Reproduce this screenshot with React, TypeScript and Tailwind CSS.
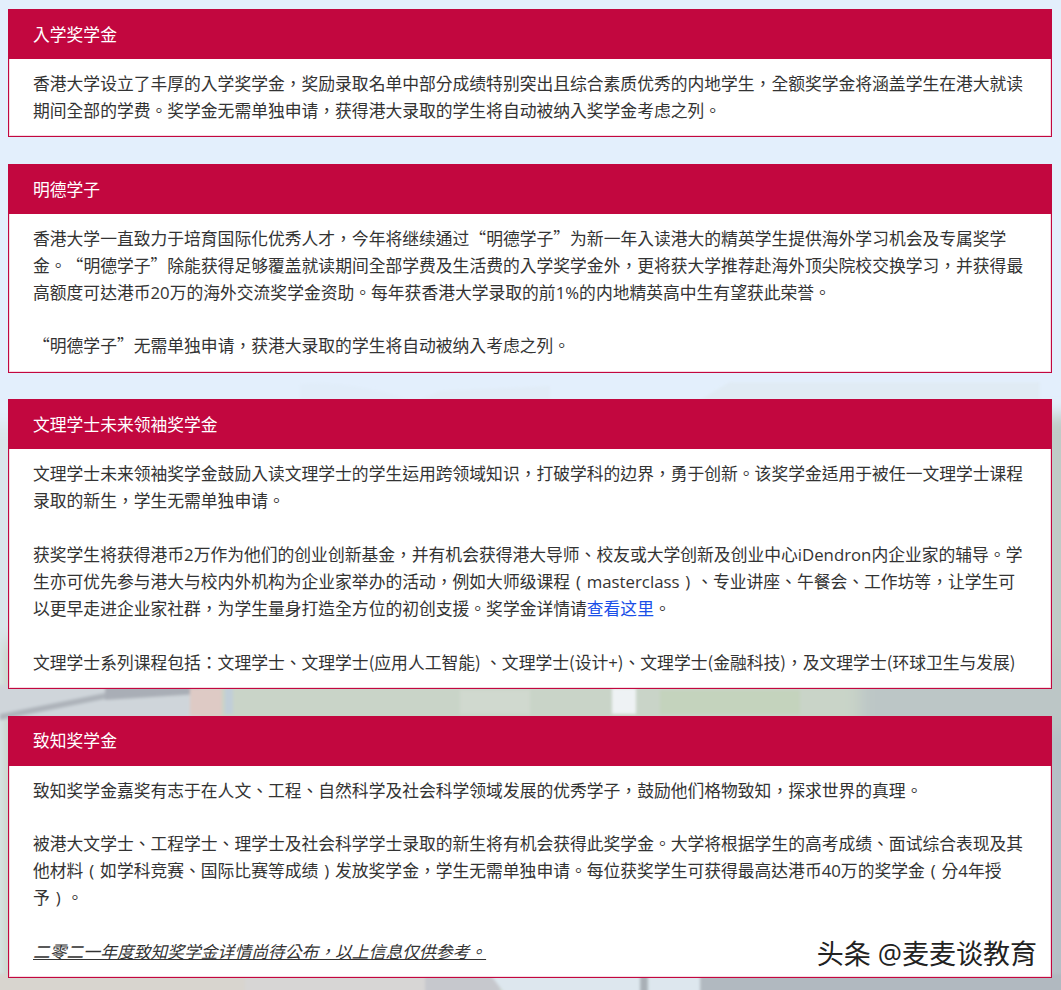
const bodyFont = "font-['Open_Sans','Noto_Sans_CJK_TC','Noto_Sans_CJK_SC',sans-serif]";

// quotes and brackets come from the CJK face, the Latin one makes them too narrow
function Cjk({ children }: { children: React.ReactNode }) {
  return <span className="font-['Noto_Sans_CJK_TC',sans-serif] leading-none">{children}</span>;
}

function Backdrop() {
  return (
    <svg
      aria-hidden="true"
      className="absolute inset-0 h-full w-full"
      viewBox="0 0 1061 990"
      preserveAspectRatio="none"
    >
      <defs>
        <filter id="soft">
          <feGaussianBlur stdDeviation="1.5" />
        </filter>
        <filter id="softer">
          <feGaussianBlur stdDeviation="8" />
        </filter>
      </defs>
      <rect width="1061" height="990" fill="#e3effc" />
      <g filter="url(#softer)">
        <rect x="0" y="640" width="1061" height="360" fill="#c9d4c8" />
        <rect x="-20" y="425" width="50" height="215" fill="#dae5ea" />
        <rect x="1040" y="415" width="50" height="290" fill="#bfcbc6" />
        <rect x="1040" y="700" width="50" height="320" fill="#b5bfc6" />
        <rect x="860" y="660" width="220" height="70" fill="#bcc6c6" />
      </g>
      <g filter="url(#soft)">
        <rect x="-5" y="685" width="205" height="35" fill="#cfd5da" />
        <path d="M0 714 L110 692 L110 698 L0 720 Z" fill="#adb3ba" />
        <path d="M105 686 L200 686 L200 694 L105 700 Z" fill="#a9aeb6" />
        <rect x="190" y="688" width="32" height="28" fill="#decac5" />
        <rect x="225" y="686" width="8" height="28" fill="#c1ced8" />
        <rect x="460" y="690" width="70" height="24" fill="#d0d9cf" />
        <rect x="612" y="688" width="24" height="26" fill="#eef2f4" />
        <rect x="660" y="690" width="140" height="24" fill="#c4d3bd" />
        <rect x="-5" y="974" width="250" height="20" fill="#d8d5cf" />
        <rect x="245" y="974" width="180" height="20" fill="#d7d6d5" />
        <rect x="425" y="974" width="75" height="20" fill="#c6c8cd" />
        <path d="M490 974 L720 974 L720 994 L505 994 Z" fill="#dde7ee" />
        <rect x="640" y="974" width="8" height="20" fill="#a9b0b6" />
        <rect x="700" y="974" width="365" height="20" fill="#b1b9c0" />
        <path d="M300 384 Q350 380 410 400 L300 400 Z" fill="#e1edf9" />
        <path d="M420 400 L440 391 L550 386 L550 400 Z" fill="#e1ecf7" />
        <path d="M700 400 L730 382 L1040 382 L1040 400 Z" fill="#e0ebf4" />
      </g>
    </svg>
  );
}

function Card({ title, children }: { title: string; children: React.ReactNode }) {
  return (
    <section className="border border-[#c2073f] bg-white">
      <h2 className="flex h-[49px] items-center bg-[#c2073f] pl-6 text-[16.8px] font-normal text-white">
        {title}
      </h2>
      <div className="px-6 pt-3 pb-[11.5px] text-[16.8px] leading-[26.88px] text-[#333] shadow-[inset_1px_0_0_#f6d9e2,inset_-1px_0_0_#f6d9e2,inset_0_-1px_0_#f6d9e2]">
        {children}
      </div>
    </section>
  );
}

export default function App() {
  return (
    <main lang="zh-Hant" className={`relative h-[990px] overflow-hidden [text-spacing-trim:space-all] ${bodyFont}`}>
      <Backdrop />
      <div className="relative flex flex-col gap-[26.65px] pt-[9px] pr-[9px] pl-2">
        <Card title="入学奖学金">
          <p>
            香港大学设立了丰厚的入学奖学金，奖励录取名单中部分成绩特别突出且综合素质优秀的内地学生，全额奖学金将涵盖学生在港大就读期间全部的学费。奖学金无需单独申请，获得港大录取的学生将自动被纳入奖学金考虑之列。
          </p>
        </Card>

        <Card title="明德学子">
          <p>
            香港大学一直致力于培育国际化优秀人才，今年将继续通过<Cjk>“</Cjk>明德学子<Cjk>”</Cjk>为新一年入读港大的精英学生提供海外学习机会及专属奖学金。<Cjk>“</Cjk>明德学子<Cjk>”</Cjk>除能获得足够覆盖就读期间全部学费及生活费的入学奖学金外，更将获大学推荐赴海外顶尖院校交换学习，并获得最高额度可达港币20万的海外交流奖学金资助。每年获香港大学录取的前1%的内地精英高中生有望获此荣誉。
          </p>
          <br />
          <p>
            <Cjk>“</Cjk>明德学子<Cjk>”</Cjk>无需单独申请，获港大录取的学生将自动被纳入考虑之列。
          </p>
        </Card>

        <Card title="文理学士未来领袖奖学金">
          <p>
            文理学士未来领袖奖学金鼓励入读文理学士的学生运用跨领域知识，打破学科的边界，勇于创新。该奖学金适用于被任一文理学士课程录取的新生，学生无需单独申请。
          </p>
          <br />
          <p>
            获奖学生将获得港币2万作为他们的创业创新基金，并有机会获得港大导师、校友或大学创新及创业中心iDendron内企业家的辅导。学生亦可优先参与港大与校内外机构为企业家举办的活动，例如大师级课程<span className="px-[5.9px]">(</span>masterclass<span className="px-[5.9px]">)</span>、专业讲座、午餐会、工作坊等，让学生可以更早走进企业家社群，为学生量身打造全方位的初创支援。奖学金详情请
            <a href="#" className="text-[#1a4fe8]">
              查看这里
            </a>
            。
          </p>
          <br />
          <p>
            文理学士系列课程包括：文理学士、文理学士<Cjk>(</Cjk>应用人工智能<Cjk>)</Cjk> 、文理学士<Cjk>(</Cjk>设计+<Cjk>)</Cjk>、文理学士<Cjk>(</Cjk>金融科技<Cjk>)</Cjk>，及文理学士<Cjk>(</Cjk>环球卫生与发展<Cjk>)</Cjk>
          </p>
        </Card>

        <div className="relative">
          <Card title="致知奖学金">
            <p>致知奖学金嘉奖有志于在人文、工程、自然科学及社会科学领域发展的优秀学子，鼓励他们格物致知，探求世界的真理。</p>
            <br />
            <p>
              被港大文学士、工程学士、理学士及社会科学学士录取的新生将有机会获得此奖学金。大学将根据学生的高考成绩、面试综合表现及其他材料<span className="px-[5.9px]">(</span>如学科竞赛、国际比赛等成绩<span className="px-[5.9px]">)</span>发放奖学金，学生无需单独申请。每位获奖学生可获得最高达港币40万的奖学金<span className="px-[5.9px]">(</span>分4年授予<span className="px-[5.9px]">)</span>。
            </p>
            <br />
            <p className="italic underline">二零二一年度致知奖学金详情尚待公布，以上信息仅供参考。</p>
          </Card>
          <span className="absolute right-[15px] bottom-[8px] text-[27px] leading-[32px] text-[#222] [text-shadow:1px_1px_0_#fff,-1px_-1px_0_#fff]">
            头条 @麦麦谈教育
          </span>
        </div>
      </div>
    </main>
  );
}
